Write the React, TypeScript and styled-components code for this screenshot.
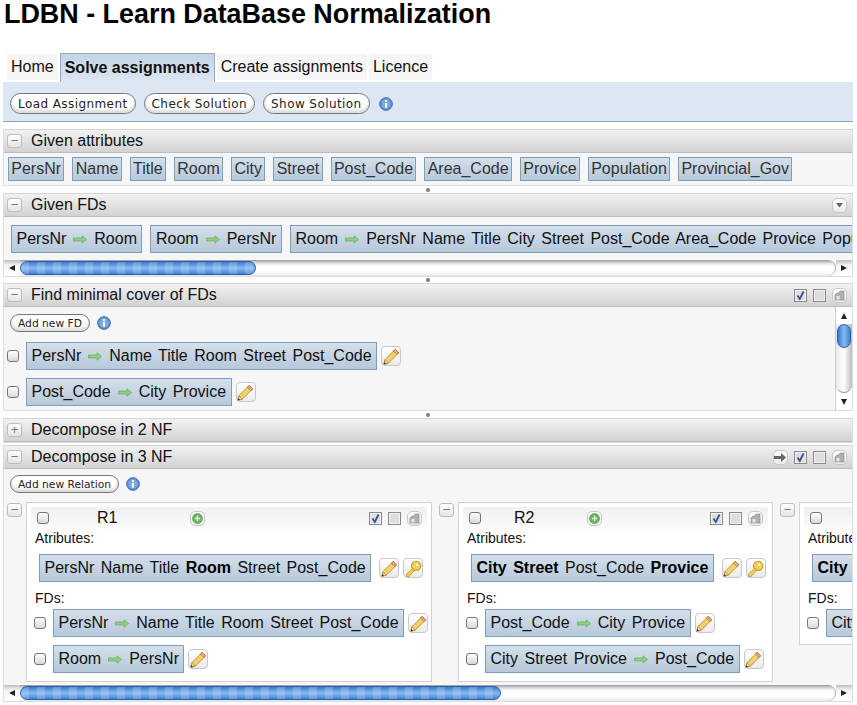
import React from "react";
import styled, { createGlobalStyle } from "styled-components";

const GlobalStyle = createGlobalStyle`
  html, body { margin: 0; padding: 0; background: #fff; }
  body { font-family: "Liberation Sans", Arial, sans-serif; color: #111; overflow: hidden; }
`;

const Page = styled.div`
  width: 857px;
  height: 705px;
  overflow: hidden;
`;

const Title = styled.h1`
  margin: 0;
  padding: 0 0 0 4px;
  height: 53px;
  font-size: 26.9px;
  line-height: 29px;
  font-weight: bold;
  color: #000;
`;

const Tabs = styled.div`
  display: flex;
  align-items: flex-start;
  height: 29px;
  padding-left: 7px;
  gap: 2px;
`;

const Tab = styled.div<{ $active?: boolean }>`
  box-sizing: border-box;
  height: ${(p) => (p.$active ? "29px" : "26px")};
  margin-top: ${(p) => (p.$active ? "0" : "1px")};
  padding: ${(p) => (p.$active ? "4px 4px 0 4px" : "3px 4px 0 4px")};
  font-size: 16px;
  line-height: 20px;
  font-weight: ${(p) => (p.$active ? "bold" : "normal")};
  background: ${(p) => (p.$active ? "linear-gradient(#c4d4e4, #dde6f3)" : "#f5f5f5")};
  border: ${(p) => (p.$active ? "1px solid #8fa9c4" : "0")};
  border-bottom: 0;
`;

const Toolbar = styled.div`
  box-sizing: border-box;
  display: flex;
  align-items: center;
  gap: 8px;
  width: 850px;
  height: 40px;
  margin: 0 0 7px 3px;
  padding: 4px 0 0 7px;
  background: #dde6f3;
  border-bottom: 1px solid #8ea4ba;
`;

const PillButton = styled.div`
  box-sizing: border-box;
  height: 21px;
  padding: 0 7px;
  display: flex;
  align-items: center;
  font-family: "DejaVu Sans", sans-serif;
  font-size: 12px;
  letter-spacing: 0.42px;
  color: #222;
  white-space: nowrap;
  border: 1px solid #777;
  border-radius: 11px;
  box-shadow: inset 0 -3px 3px #ddd;
  background: #fff;
`;

const InfoSlot = styled.div`
  display: flex;
  margin-left: 1px;
`;

const Panel = styled.section`
  box-sizing: border-box;
  width: 850px;
  margin-left: 3px;
  background: #f6f6f6;
  border: 1px solid #ddd;
  border-top-color: #d4d4d4;
`;

const PanelHeader = styled.div`
  box-sizing: border-box;
  display: flex;
  align-items: center;
  height: 23px;
  padding: 0 5px 0 3px;
  background: linear-gradient(#f2f2f2, #d2d2d2);
  border-bottom: 1px solid #bcbcbc;
`;

const PanelTitle = styled.span`
  flex: 1;
  margin-left: 9px;
  font-size: 16px;
  line-height: 20px;
`;

const HeaderTools = styled.div`
  display: flex;
  align-items: center;
  gap: 6px;
`;

const Splitter = styled.div<{ $height?: number }>`
  height: ${(p) => p.$height ?? 7}px;
  width: 850px;
  margin-left: 3px;
  display: flex;
  align-items: center;
  justify-content: center;
  &::after {
    content: "";
    width: 4px;
    height: 4px;
    border-radius: 50%;
    background: #7d7d7d;
  }
`;

const TightGap = styled.div`
  height: 2px;
`;

const Collapse = styled.div`
  box-sizing: border-box;
  flex: none;
  width: 15px;
  height: 14px;
  display: flex;
  align-items: center;
  justify-content: center;
  border: 1px solid #bdbdbd;
  border-radius: 3px;
  background: linear-gradient(#fff, #e4e4e4);
  color: #777;
  font-size: 13px;
  line-height: 12px;
`;

const Tag = styled.div<{ $size: "small" | "large" }>`
  box-sizing: border-box;
  flex: none;
  display: inline-flex;
  align-items: center;
  height: ${(p) => (p.$size === "small" ? "24px" : "28px")};
  padding: 0 ${(p) => (p.$size === "small" ? "2.3px" : "4.5px")};
  font-size: 16px;
  word-spacing: 2px;
  white-space: pre;
  color: ${(p) => (p.$size === "small" ? "#333" : "#111")};
  border: 1px solid #7e9cbc;
  background: linear-gradient(#d4e0ea, #b6c8da);
  b { font-weight: bold; color: #000; }
`;

const AttributeRow = styled.div`
  box-sizing: border-box;
  height: 32px;
  display: flex;
  align-items: center;
  gap: 8px;
  padding-left: 4px;
  overflow: hidden;
`;

const GivenFdRow = styled.div`
  box-sizing: border-box;
  height: 43px;
  padding: 1px 0 0 7px;
  display: flex;
  align-items: center;
  gap: 8px;
  overflow: hidden;
`;

const HBar = styled.div`
  display: flex;
  align-items: stretch;
  height: 16px;
  background: #fff;
`;

const BarArrow = styled.div<{ $dir: "left" | "right" }>`
  width: 16px;
  flex: none;
  display: flex;
  align-items: center;
  justify-content: center;
  background: linear-gradient(#bdbdbd, #f4f4f4 5px, #fff);
  &::after {
    content: "";
    border-top: 3px solid transparent;
    border-bottom: 3px solid transparent;
    ${(p) => (p.$dir === "left" ? "border-right: 6px solid #222;" : "border-left: 6px solid #222;")}
  }
`;

const HTrack = styled.div`
  flex: 1;
  border-radius: 0 8px 8px 0;
  background: linear-gradient(#9a9a9a 0, #dcdcdc 3px, #fff 6px, #fff 12px, #e6e6e6 16px);
  border-right: 1px solid #aaa;
`;

const HThumb = styled.div`
  box-sizing: border-box;
  height: 14px;
  margin-top: 1px;
  border-radius: 7px;
  border: 1px solid #2a5fa8;
  background:
    repeating-linear-gradient(90deg, rgba(255, 255, 255, 0.18) 0 8px, rgba(255, 255, 255, 0) 8px 16px),
    linear-gradient(#3b7ace, #86b9f0 50%, #4384d6);
`;

const ContentWithBar = styled.div`
  display: flex;
  height: 103px;
`;

const MinCoverBody = styled.div`
  flex: 1;
  padding: 7px 0 0 6px;
`;

const ButtonRow = styled.div`
  display: flex;
  align-items: center;
  gap: 7px;
  height: 18px;
  ${PillButton} {
    height: 18px;
    font-size: 10.7px;
    letter-spacing: 0;
  }
`;

const FdList = styled.div`
  display: flex;
  flex-direction: column;
  gap: 8px;
  margin-top: 10px;
`;

const FdLine = styled.div`
  display: flex;
  align-items: center;
  height: 28px;
  gap: 4px;
`;

const CheckSlot = styled.div`
  width: 15px;
  margin-left: -3px;
  flex: none;
  display: flex;
`;

const Box = styled.div`
  box-sizing: border-box;
  flex: none;
  width: 12px;
  height: 12px;
  border: 1px solid #777;
  border-radius: 3px;
  background: linear-gradient(#fff, #d8d8d8);
`;

const VBar = styled.div`
  width: 16px;
  flex: none;
  display: flex;
  flex-direction: column;
  align-items: center;
  border-left: 1px solid #ccc;
  background: #fff;
`;

const VArrow = styled.div<{ $dir: "up" | "down" }>`
  height: 17px;
  display: flex;
  align-items: center;
  justify-content: center;
  flex: none;
  &::after {
    content: "";
    border-left: 3px solid transparent;
    border-right: 3px solid transparent;
    ${(p) => (p.$dir === "up" ? "border-bottom: 6px solid #222;" : "border-top: 6px solid #222;")}
  }
`;

const VTrack = styled.div`
  flex: 1;
  width: 100%;
  border-radius: 0 0 8px 8px;
  background: linear-gradient(90deg, #e8e8e8, #fff 50%, #bbb);
  border-bottom: 1px solid #999;
`;

const VThumb = styled.div`
  box-sizing: border-box;
  width: 14px;
  height: 24px;
  margin: 0 auto;
  border-radius: 7px;
  border: 1px solid #2a5fa8;
  background: linear-gradient(90deg, #3b7ace, #86b9f0 50%, #4384d6);
`;

const DecomposeBody = styled.div`
  height: 232px;
  display: flex;
  flex-direction: column;
`;

const DecomposeTop = styled.div`
  padding: 6px 0 0 6px;
`;

const Relations = styled.div`
  height: 183px;
  margin-top: 9px;
  padding-left: 3px;
  display: flex;
  align-items: flex-start;
  gap: 7px;
  overflow: hidden;
`;

const RelationWrap = styled.div`
  display: flex;
  gap: 4px;
  flex: none;
  align-items: flex-start;
`;

const CollapseOffset = styled.div`
  margin-top: 1px;
  display: flex;
`;

const Card = styled.div<{ $width: number; $height: number }>`
  box-sizing: border-box;
  width: ${(p) => p.$width}px;
  height: ${(p) => p.$height}px;
  flex: none;
  padding: 4px;
  background: #fff;
  border: 1px solid #ccd3da;
`;

const CardHead = styled.div`
  display: flex;
  align-items: center;
  height: 22px;
  padding: 0 5px 0 6px;
  background: linear-gradient(#f0f0f0, #fbfbfb);
`;

const CardName = styled.span<{ $offset: number; $width: number }>`
  flex: none;
  width: ${(p) => p.$width}px;
  margin-left: ${(p) => p.$offset}px;
  font-size: 16px;
  line-height: 20px;
`;

const CardTools = styled(HeaderTools)`
  margin-left: auto;
`;

const Caption = styled.div`
  font-size: 14px;
  line-height: 18px;
  padding-left: 4px;
  color: #111;
`;

const AttrLine = styled.div`
  display: flex;
  align-items: center;
  gap: 4px;
  height: 28px;
  margin: 7px 0 7px 8px;
  ${Tag} {
    margin-right: 4px;
  }
`;

const RelFdList = styled.div`
  display: flex;
  flex-direction: column;
  gap: 8px;
  margin-top: 2px;
`;

const RelFdLine = styled.div`
  display: flex;
  align-items: center;
  gap: 4px;
  height: 28px;
`;

const RelCheck = styled.div`
  box-sizing: border-box;
  width: 18px;
  flex: none;
  display: flex;
  padding-left: 3px;
`;

const IconButton = styled.div`
  box-sizing: border-box;
  flex: none;
  width: 20px;
  height: 20px;
  display: flex;
  align-items: center;
  justify-content: center;
  border: 1px solid #c8c8c8;
  border-radius: 4px;
  background: linear-gradient(#fff, #eaeaea);
`;

const GhostButton = styled(IconButton)`
  width: 15px;
  height: 15px;
  border-radius: 5px;
`;

const ArrowGlyph = styled.svg`
  flex: none;
  margin: 0 7px;
`;

const Arrow = () => (
  <ArrowGlyph width="14" height="9" viewBox="0 0 14 9">
    <path d="M0.5 3h8.5V0.8l4.5 3.7-4.5 3.7V6H0.5z" fill="#8fcf7f" stroke="#5ca552" strokeWidth="0.6" />
  </ArrowGlyph>
);

const Info = () => (
  <svg width="14" height="14" viewBox="0 0 15 15">
    <circle cx="7.5" cy="7.5" r="6.8" fill="#5b8fd0" stroke="#3a6cab" />
    <circle cx="7.5" cy="7.5" r="5" fill="#7ea9dc" />
    <rect x="6.4" y="6.4" width="2.2" height="5" fill="#fff" />
    <circle cx="7.5" cy="4.4" r="1.2" fill="#fff" />
  </svg>
);

const Pencil = () => (
  <svg width="17" height="17" viewBox="0 0 16 16">
    <path d="M11.5 1.2l3.3 3.3L5 14.3l-4.2 1 1-4.2z" fill="#f4d06a" stroke="#b98428" strokeWidth="0.8" />
    <path d="M11.5 1.2l3.3 3.3-1.7 1.7-3.3-3.3z" fill="#e6a98a" stroke="#a8672c" strokeWidth="0.6" />
    <path d="M1.8 11.1l-1 4.2 4.2-1z" fill="#f0dfc0" stroke="#8a6a3a" strokeWidth="0.5" />
    <path d="M1.3 13.2l-.5 2.1 2.1-.5z" fill="#3a2a18" />
  </svg>
);

const Key = () => (
  <svg width="17" height="17" viewBox="0 0 16 16">
    <circle cx="10.5" cy="5.5" r="4.4" fill="#f3cf5c" stroke="#c6982e" />
    <path d="M7.5 7.5L1.5 13.2v2.3h2.6l.5-1.5 1.5-.5.5-1.5 2-1.5z" fill="#f3cf5c" stroke="#c6982e" strokeWidth="0.8" />
    <circle cx="11.5" cy="4.5" r="1.1" fill="#fff6cf" />
  </svg>
);

const Plus = () => (
  <svg width="11" height="11" viewBox="0 0 11 11">
    <circle cx="5.5" cy="5.5" r="5" fill="#67b35e" stroke="#4b9443" strokeWidth="0.6" />
    <path d="M5.5 2.8v5.4M2.8 5.5h5.4" stroke="#e8f6e4" strokeWidth="1.4" />
  </svg>
);

const CheckIcon = ({ checked }: { checked?: boolean }) => (
  <svg width="13" height="13" viewBox="0 0 13 13">
    <rect x="0.5" y="0.5" width="12" height="12" fill="#f2f2f2" stroke="#8a8a8a" />
    <rect x="2" y="2" width="9" height="9" fill="#dedede" />
    {checked && <path d="M3.5 6.5l2.3 3.4L9.5 2.5" fill="none" stroke="#3a4f96" strokeWidth="1.8" />}
  </svg>
);

const SaveIcon = () => (
  <GhostButton>
    <svg width="11" height="11" viewBox="0 0 11 11">
      <path d="M1 10V5l2-2h2l1-2h4v9z" fill="#b0b0b0" stroke="#8c8c8c" strokeWidth="0.6" />
      <rect x="2.5" y="6" width="3" height="3.5" fill="#e8e8e8" />
    </svg>
  </GhostButton>
);

const TriTools = () => (
  <>
    <CheckIcon checked />
    <CheckIcon />
    <SaveIcon />
  </>
);

const AddIcon = () => (
  <GhostButton>
    <Plus />
  </GhostButton>
);

const Fd = ({ from, to }: { from: string; to: string }) => (
  <Tag $size="large">
    {from}
    <Arrow />
    {to}
  </Tag>
);

const attributes = [
  "PersNr", "Name", "Title", "Room", "City", "Street", "Post_Code",
  "Area_Code", "Provice", "Population", "Provincial_Gov",
];

const relations = [
  {
    name: "R1",
    width: 406,
    height: 180,
    nameOffset: 48,
    nameWidth: 93,
    attrs: (
      <>
        PersNr Name Title <b>Room</b> Street Post_Code
      </>
    ),
    fds: [
      { from: "PersNr", to: "Name Title Room Street Post_Code" },
      { from: "Room", to: "PersNr" },
    ],
  },
  {
    name: "R2",
    width: 315,
    height: 180,
    nameOffset: 33,
    nameWidth: 73,
    attrs: (
      <>
        <b>City Street</b> Post_Code <b>Provice</b>
      </>
    ),
    fds: [
      { from: "Post_Code", to: "City Provice" },
      { from: "City Street Provice", to: "Post_Code" },
    ],
  },
  {
    name: "",
    width: 200,
    height: 143,
    nameOffset: 33,
    nameWidth: 20,
    attrs: (
      <>
        <b>City Street</b> Post_Code
      </>
    ),
    fds: [{ from: "City Street", to: "Post_Code" }],
  },
];

const App = () => {
  return (
    <Page>
      <GlobalStyle />
      <Title>LDBN - Learn DataBase Normalization</Title>
      <Tabs>
        <Tab>Home</Tab>
        <Tab $active>Solve assignments</Tab>
        <Tab>Create assignments</Tab>
        <Tab>Licence</Tab>
      </Tabs>
      <Toolbar>
        <PillButton>Load Assignment</PillButton>
        <PillButton>Check Solution</PillButton>
        <PillButton>Show Solution</PillButton>
        <InfoSlot>
          <Info />
        </InfoSlot>
      </Toolbar>

      <Panel>
        <PanelHeader>
          <Collapse>−</Collapse>
          <PanelTitle>Given attributes</PanelTitle>
        </PanelHeader>
        <AttributeRow>
          {attributes.map((a) => (
            <Tag $size="small" key={a}>
              {a}
            </Tag>
          ))}
        </AttributeRow>
      </Panel>
      <Splitter />

      <Panel>
        <PanelHeader>
          <Collapse>−</Collapse>
          <PanelTitle>Given FDs</PanelTitle>
          <GhostButton>
            <svg width="9" height="5" viewBox="0 0 9 5">
              <path d="M1 0h7L4.5 4.5z" fill="#666" />
            </svg>
          </GhostButton>
        </PanelHeader>
        <GivenFdRow>
          <Fd from="PersNr" to="Room" />
          <Fd from="Room" to="PersNr" />
          <Fd from="Room" to="PersNr Name Title City Street Post_Code Area_Code Provice Population Provincial_Gov" />
        </GivenFdRow>
        <HBar>
          <BarArrow $dir="left" />
          <HTrack>
            <HThumb style={{ width: 236 }} />
          </HTrack>
          <BarArrow $dir="right" />
        </HBar>
      </Panel>
      <Splitter $height={6} />

      <Panel>
        <PanelHeader>
          <Collapse>−</Collapse>
          <PanelTitle>Find minimal cover of FDs</PanelTitle>
          <HeaderTools>
            <TriTools />
          </HeaderTools>
        </PanelHeader>
        <ContentWithBar>
          <MinCoverBody>
            <ButtonRow>
              <PillButton>Add new FD</PillButton>
              <Info />
            </ButtonRow>
            <FdList>
              <FdLine>
                <CheckSlot>
                  <Box />
                </CheckSlot>
                <Fd from="PersNr" to="Name Title Room Street Post_Code" />
                <IconButton>
                  <Pencil />
                </IconButton>
              </FdLine>
              <FdLine>
                <CheckSlot>
                  <Box />
                </CheckSlot>
                <Fd from="Post_Code" to="City Provice" />
                <IconButton>
                  <Pencil />
                </IconButton>
              </FdLine>
            </FdList>
          </MinCoverBody>
          <VBar>
            <VArrow $dir="up" />
            <VTrack>
              <VThumb />
            </VTrack>
            <VArrow $dir="down" />
          </VBar>
        </ContentWithBar>
      </Panel>
      <Splitter />

      <Panel>
        <PanelHeader>
          <Collapse>+</Collapse>
          <PanelTitle>Decompose in 2 NF</PanelTitle>
        </PanelHeader>
      </Panel>
      <TightGap />
      <Panel>
        <PanelHeader>
          <Collapse>−</Collapse>
          <PanelTitle>Decompose in 3 NF</PanelTitle>
          <HeaderTools>
            <GhostButton>
              <svg width="13" height="11" viewBox="0 0 13 11">
                <path d="M0 4h7V1l5 4.5L7 10V7H0z" fill="#666" />
              </svg>
            </GhostButton>
            <TriTools />
          </HeaderTools>
        </PanelHeader>
        <DecomposeBody>
          <DecomposeTop>
            <ButtonRow>
              <PillButton>Add new Relation</PillButton>
              <Info />
            </ButtonRow>
          </DecomposeTop>
          <Relations>
            {relations.map((r) => (
              <RelationWrap key={r.name || "R3"}>
                <CollapseOffset>
                  <Collapse>−</Collapse>
                </CollapseOffset>
                <Card $width={r.width} $height={r.height}>
                  <CardHead>
                    <Box />
                    <CardName $offset={r.nameOffset} $width={r.nameWidth}>
                      {r.name}
                    </CardName>
                    <AddIcon />
                    <CardTools>
                      <TriTools />
                    </CardTools>
                  </CardHead>
                  <Caption>Atributes:</Caption>
                  <AttrLine>
                    <Tag $size="large">{r.attrs}</Tag>
                    <IconButton>
                      <Pencil />
                    </IconButton>
                    <IconButton>
                      <Key />
                    </IconButton>
                  </AttrLine>
                  <Caption>FDs:</Caption>
                  <RelFdList>
                    {r.fds.map((f) => (
                      <RelFdLine key={f.from}>
                        <RelCheck>
                          <Box />
                        </RelCheck>
                        <Fd from={f.from} to={f.to} />
                        <IconButton>
                          <Pencil />
                        </IconButton>
                      </RelFdLine>
                    ))}
                  </RelFdList>
                </Card>
              </RelationWrap>
            ))}
          </Relations>
          <HBar>
            <BarArrow $dir="left" />
            <HTrack>
              <HThumb style={{ width: 481 }} />
            </HTrack>
            <BarArrow $dir="right" />
          </HBar>
        </DecomposeBody>
      </Panel>
    </Page>
  );
};

export default App;
